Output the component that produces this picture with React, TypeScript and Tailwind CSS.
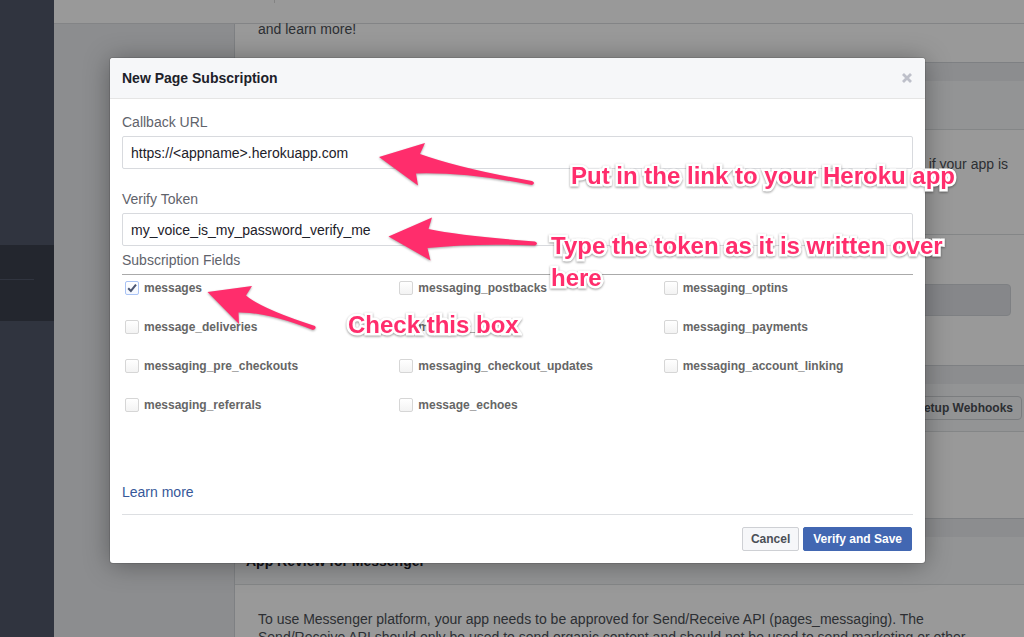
import React from "react";

const fields = [
  "messages",
  "messaging_postbacks",
  "messaging_optins",
  "message_deliveries",
  "message_reads",
  "messaging_payments",
  "messaging_pre_checkouts",
  "messaging_checkout_updates",
  "messaging_account_linking",
  "messaging_referrals",
  "message_echoes",
];

const noteClass =
  "absolute text-2xl leading-8 font-bold text-[#ff2d6c] [-webkit-text-stroke:5px_white] [paint-order:stroke_fill] drop-shadow-[0_1px_1px_rgba(0,0,0,0.4)]";

function Backdrop() {
  return (
    <div aria-hidden="true" inert className="flex h-full overflow-hidden bg-[#e9ebee] text-sm leading-[18px] text-[#4b4f56]">
      <div className="w-[54px] shrink-0 bg-[#515869]">
        <div className="mt-[245px] h-[76px] bg-[#3b404e] pt-[34px]">
          <div className="mr-5 border-t border-[#51586a]" />
        </div>
      </div>
      <div className="flex min-w-0 grow flex-col">
        <div className="h-6 shrink-0 border-b border-[#dadcdf] bg-white pl-[220px]">
          <div className="h-[3px] w-px bg-[#dadada]" />
        </div>
        <div className="ml-[180px] flex flex-col gap-[18px]">
          <section className="h-[39px] border-b border-l border-[#d3d6db] bg-white pl-[23px]">
            <p className="-mt-1">and learn more!</p>
          </section>
          <section className="h-[285px] border-b border-l border-[#d3d6db] bg-white">
            <div className="h-[49px] border-b border-[#dddfe2] bg-[#f6f7f9]" />
            <div className="flex h-[105px] justify-end border-b border-[#dddfe2] pt-[25px] pr-4">
              <p>if your app is</p>
            </div>
            <div className="mt-[49px] mr-[13px] ml-6 h-8 rounded-sm border border-[#d3d6db] bg-[#e0e2e6]" />
          </section>
          <section className="h-[135px] border-b border-l border-[#d3d6db] bg-white">
            <div className="flex h-[48px] items-center justify-end border-b border-[#dddfe2] bg-[#f6f7f9] pr-[2px]">
              <button type="button" className="h-6 rounded-sm border border-[#ced0d4] bg-[#f6f7f9] px-2 text-xs leading-none font-bold">
                Setup Webhooks
              </button>
            </div>
          </section>
          <section className="border-l border-[#d3d6db] bg-white">
            <h2 className="flex h-[48px] items-center border-b border-[#dddfe2] bg-[#f6f7f9] pl-[11px] font-bold text-[#1d2129]">
              App Review for Messenger
            </h2>
            <p className="px-[23px] pt-[25px]">
              To use Messenger platform, your app needs to be approved for Send/Receive API (pages_messaging). The Send/Receive API should only be used to send organic content and should not be used to send marketing or other promotional content.
            </p>
          </section>
        </div>
      </div>
    </div>
  );
}

function Field({ id, label, value }: { id: string; label: string; value: string }) {
  return (
    <div className="flex flex-col">
      <label htmlFor={id} className="leading-5">
        {label}
      </label>
      <input
        id={id}
        defaultValue={value}
        className="mt-1 h-[33px] w-full rounded-[2px] border border-[#d8dade] bg-white px-2 text-[#1d2129] outline-none"
      />
    </div>
  );
}

function CheckField({ name, checked }: { name: string; checked: boolean }) {
  return (
    <label className="flex h-[39px] items-start gap-1 pt-[5px] text-xs leading-4 font-bold text-[#666]">
      <span className="grid">
        <input
          type="checkbox"
          defaultChecked={checked}
          className="peer col-start-1 row-start-1 m-px size-[14px] appearance-none rounded-[2px] border border-[#d6d6d6] bg-linear-to-b from-white to-[#f3f3f3] checked:border-[#a9c3f5] checked:to-[#f4f8ff]"
        />
        <svg
          viewBox="0 0 16 16"
          className="pointer-events-none invisible col-start-1 row-start-1 size-4 peer-checked:visible"
          fill="none"
          stroke="#4b5672"
          strokeWidth="2"
        >
          <path d="M4.2 8.2 6.9 11 12 4.7" />
        </svg>
      </span>
      {name}
    </label>
  );
}

function Dialog() {
  return (
    <div
      role="dialog"
      aria-labelledby="dialog-title"
      className="w-full rounded-[3px] bg-white text-sm text-[#5f636b] shadow-[0_2px_26px_rgba(0,0,0,0.35),0_0_0_1px_rgba(0,0,0,0.1)]"
    >
      <header className="flex h-[41px] items-center justify-between rounded-t-[3px] border-b border-[#e5e5e5] bg-[#f6f7f9] pr-[13px] pl-3">
        <h1 id="dialog-title" className="font-bold text-[#1d2129]">
          New Page Subscription
        </h1>
        <button type="button" aria-label="Close">
          <svg viewBox="0 0 10 10" className="size-[10px]" stroke="#bec0ca" strokeWidth="2.8">
            <path d="M1 1 9 9M9 1 1 9" />
          </svg>
        </button>
      </header>
      <form className="px-3 pt-[13px] pb-3" onSubmit={(e) => e.preventDefault()}>
        <div className="flex flex-col gap-5">
          <Field id="callback" label="Callback URL" value="https://<appname>.herokuapp.com" />
          <Field id="token" label="Verify Token" value="my_voice_is_my_password_verify_me" />
        </div>
        <fieldset>
          <legend className="w-full border-b border-[#aaa] pt-1 pb-1 leading-5">Subscription Fields</legend>
          <div className="grid grid-cols-[275fr_265fr_251fr] pl-[2px]">
            {fields.map((f) => (
              <CheckField key={f} name={f} checked={f === "messages"} />
            ))}
          </div>
        </fieldset>
        <div className="border-b border-[#dddfe2] pt-[51px] pb-3 leading-5">
          <a href="#learn" className="text-[#365899]">
            Learn more
          </a>
        </div>
        <div className="flex justify-end gap-1 pt-3 pr-px text-xs font-bold">
          <button type="button" className="h-6 rounded-[2px] border border-[#ced0d4] bg-[#f6f7f9] px-2 leading-none text-[#4b4f56]">
            Cancel
          </button>
          <button type="submit" className="h-6 rounded-[2px] border border-[#4267b2] bg-[#4267b2] px-[9px] leading-none text-white">
            Verify and Save
          </button>
        </div>
      </form>
    </div>
  );
}

export default function App() {
  return (
    <div className="relative h-screen overflow-hidden font-['Liberation_Sans',Arial,sans-serif]">
      <Backdrop />
      <div className="absolute inset-0 bg-black/40 pt-[58px] pr-[99px] pl-[110px]">
        <Dialog />
      </div>
      <div className="pointer-events-none absolute inset-0">
        <svg width="1024" height="637" viewBox="0 0 1024 637" fill="#ff2d6c" className="absolute top-0 left-0 drop-shadow-[0_1px_1px_rgba(0,0,0,0.35)]">
          <path d="M379 157 425 143 420 154 Q462 169 532 181 Q536 183 532 185 Q465 172 416 173.500L418 185.500Z" />
          <path d="M388.500 236.500 432 217.500 428.500 229 Q462 236 535 241.500 Q539 243.500 535 245.500 Q475 243 427.500 248L430.500 260.500Z" />
          <path d="M207.500 292 252 286 246 295.500 Q262 309 315 326 Q317 329 313 330 Q268 312 238.500 312.500L239 324Z" />
        </svg>
        <p className={noteClass + " top-[160px] left-[571px] whitespace-nowrap"}>Put in the link to your Heroku app</p>
        <p className={noteClass + " top-[230px] left-[551px] w-[410px]"}>Type the token as it is written over here</p>
        <p className={noteClass + " top-[309px] left-[348px] whitespace-nowrap"}>Check this box</p>
      </div>
    </div>
  );
}
